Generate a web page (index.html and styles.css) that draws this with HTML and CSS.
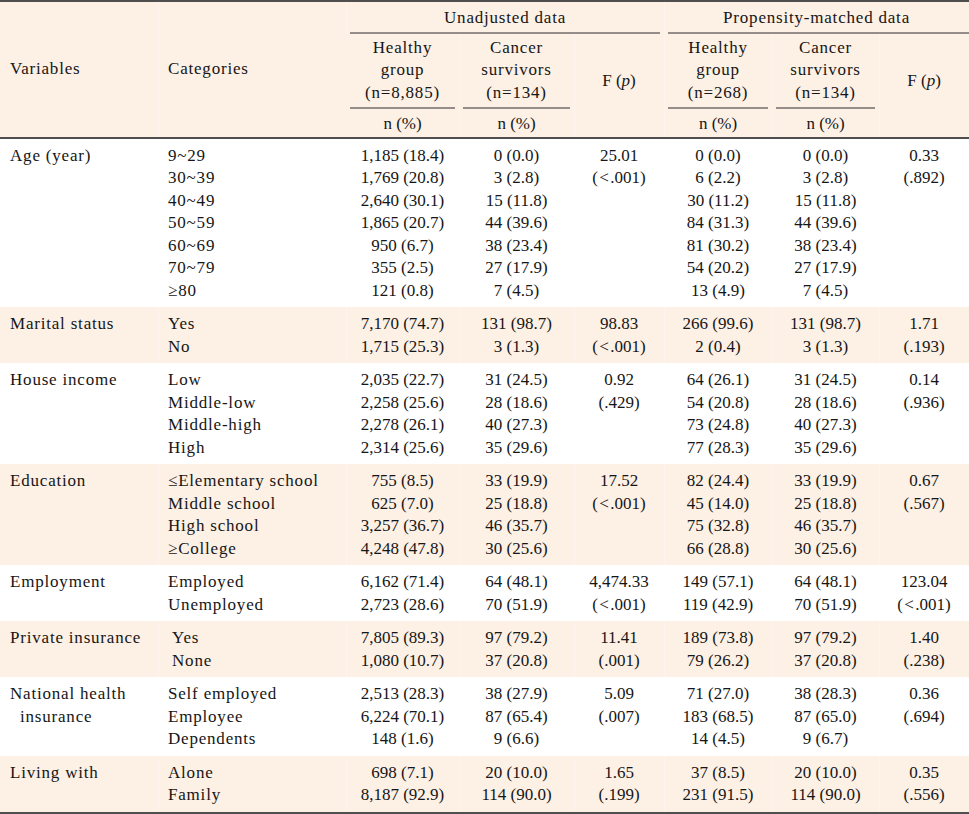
FILE: index.html
```html
<!DOCTYPE html>
<html lang="en">
<head>
<meta charset="utf-8">
<title>Table</title>
<link rel="stylesheet" href="styles.css">
</head>
<body>
<table class="tbl">
  <colgroup>
    <col class="c1"><col class="c2"><col class="c3"><col class="c4"><col class="c5"><col class="c6"><col class="c7"><col class="c8">
  </colgroup>
  <thead>
    <tr class="h1">
      <th rowspan="3" class="lft txt">Variables</th>
      <th rowspan="3" class="lft txt">Categories</th>
      <th colspan="3" class="span txt">Unadjusted data</th>
      <th colspan="3" class="span span-last txt">Propensity-matched data</th>
    </tr>
    <tr class="h2">
      <th class="grp txt">Healthy<br>group<br>(n=8,885)</th>
      <th class="grp txt">Cancer<br>survivors<br>(n=134)</th>
      <th rowspan="2" class="fp">F (<i>p</i>)</th>
      <th class="grp txt">Healthy<br>group<br>(n=268)</th>
      <th class="grp txt">Cancer<br>survivors<br>(n=134)</th>
      <th rowspan="2" class="fp">F (<i>p</i>)</th>
    </tr>
    <tr class="h3">
      <th>n (%)</th>
      <th>n (%)</th>
      <th>n (%)</th>
      <th>n (%)</th>
    </tr>
  </thead>
  <tbody>
    <tr>
      <td class="lft txt">Age (year)</td>
      <td class="lft txt">9~29<br>30~39<br>40~49<br>50~59<br>60~69<br>70~79<br>≥80</td>
      <td>1,185 (18.4)<br>1,769 (20.8)<br>2,640 (30.1)<br>1,865 (20.7)<br>950 (6.7)<br>355 (2.5)<br>121 (0.8)</td>
      <td>0 (0.0)<br>3 (2.8)<br>15 (11.8)<br>44 (39.6)<br>38 (23.4)<br>27 (17.9)<br>7 (4.5)</td>
      <td>25.01<br>(&#8202;&lt;&#8202;.001)</td>
      <td>0 (0.0)<br>6 (2.2)<br>30 (11.2)<br>84 (31.3)<br>81 (30.2)<br>54 (20.2)<br>13 (4.9)</td>
      <td>0 (0.0)<br>3 (2.8)<br>15 (11.8)<br>44 (39.6)<br>38 (23.4)<br>27 (17.9)<br>7 (4.5)</td>
      <td>0.33<br>(.892)</td>
    </tr>
    <tr class="alt">
      <td class="lft txt">Marital status</td>
      <td class="lft txt">Yes<br>No</td>
      <td>7,170 (74.7)<br>1,715 (25.3)</td>
      <td>131 (98.7)<br>3 (1.3)</td>
      <td>98.83<br>(&#8202;&lt;&#8202;.001)</td>
      <td>266 (99.6)<br>2 (0.4)</td>
      <td>131 (98.7)<br>3 (1.3)</td>
      <td>1.71<br>(.193)</td>
    </tr>
    <tr>
      <td class="lft txt">House income</td>
      <td class="lft txt">Low<br>Middle-low<br>Middle-high<br>High</td>
      <td>2,035 (22.7)<br>2,258 (25.6)<br>2,278 (26.1)<br>2,314 (25.6)</td>
      <td>31 (24.5)<br>28 (18.6)<br>40 (27.3)<br>35 (29.6)</td>
      <td>0.92<br>(.429)</td>
      <td>64 (26.1)<br>54 (20.8)<br>73 (24.8)<br>77 (28.3)</td>
      <td>31 (24.5)<br>28 (18.6)<br>40 (27.3)<br>35 (29.6)</td>
      <td>0.14<br>(.936)</td>
    </tr>
    <tr class="alt">
      <td class="lft txt">Education</td>
      <td class="lft txt">≤Elementary school<br>Middle school<br>High school<br>≥College</td>
      <td>755 (8.5)<br>625 (7.0)<br>3,257 (36.7)<br>4,248 (47.8)</td>
      <td>33 (19.9)<br>25 (18.8)<br>46 (35.7)<br>30 (25.6)</td>
      <td>17.52<br>(&#8202;&lt;&#8202;.001)</td>
      <td>82 (24.4)<br>45 (14.0)<br>75 (32.8)<br>66 (28.8)</td>
      <td>33 (19.9)<br>25 (18.8)<br>46 (35.7)<br>30 (25.6)</td>
      <td>0.67<br>(.567)</td>
    </tr>
    <tr>
      <td class="lft txt">Employment</td>
      <td class="lft txt">Employed<br>Unemployed</td>
      <td>6,162 (71.4)<br>2,723 (28.6)</td>
      <td>64 (48.1)<br>70 (51.9)</td>
      <td>4,474.33<br>(&#8202;&lt;&#8202;.001)</td>
      <td>149 (57.1)<br>119 (42.9)</td>
      <td>64 (48.1)<br>70 (51.9)</td>
      <td>123.04<br>(&#8202;&lt;&#8202;.001)</td>
    </tr>
    <tr class="alt">
      <td class="lft txt">Private insurance</td>
      <td class="lft txt ind">Yes<br>None</td>
      <td>7,805 (89.3)<br>1,080 (10.7)</td>
      <td>97 (79.2)<br>37 (20.8)</td>
      <td>11.41<br>(.001)</td>
      <td>189 (73.8)<br>79 (26.2)</td>
      <td>97 (79.2)<br>37 (20.8)</td>
      <td>1.40<br>(.238)</td>
    </tr>
    <tr>
      <td class="lft txt hang">National health insurance</td>
      <td class="lft txt">Self employed<br>Employee<br>Dependents</td>
      <td>2,513 (28.3)<br>6,224 (70.1)<br>148 (1.6)</td>
      <td>38 (27.9)<br>87 (65.4)<br>9 (6.6)</td>
      <td>5.09<br>(.007)</td>
      <td>71 (27.0)<br>183 (68.5)<br>14 (4.5)</td>
      <td>38 (28.3)<br>87 (65.0)<br>9 (6.7)</td>
      <td>0.36<br>(.694)</td>
    </tr>
    <tr class="alt">
      <td class="lft txt">Living with</td>
      <td class="lft txt">Alone<br>Family</td>
      <td>698 (7.1)<br>8,187 (92.9)</td>
      <td>20 (10.0)<br>114 (90.0)</td>
      <td>1.65<br>(.199)</td>
      <td>37 (8.5)<br>231 (91.5)</td>
      <td>20 (10.0)<br>114 (90.0)</td>
      <td>0.35<br>(.556)</td>
    </tr>
  </tbody>
</table>
</body>
</html>
```

FILE: styles.css
```css
html, body {
  margin: 0;
  padding: 0;
  background: #ffffff;
}

body {
  font-family: "Liberation Serif", "Times New Roman", serif;
  font-size: 17px;
  color: #161616;
}

.tbl {
  width: 969px;
  table-layout: fixed;
  border-collapse: collapse;
  border-top: 2px solid #4f4f4f;
  border-bottom: 2px solid #4f4f4f;
  line-height: 22.5px;
}

.c1 { width: 158px; }
.c2 { width: 188px; }
.c3 { width: 113px; }
.c4 { width: 115px; }
.c5 { width: 90px; }
.c6 { width: 108px; }
.c7 { width: 107px; }
.c8 { width: 90px; }

th, td {
  padding: 0;
  font-weight: normal;
  text-align: center;
  box-shadow: inset 1px 0 0 rgba(255, 255, 255, 0.3);
}

th:first-child, td:first-child {
  box-shadow: none;
}

.txt {
  letter-spacing: 0.8px;
}

thead tr {
  background: #fdf0e5;
}

thead {
  border-bottom: 2px solid #4f4f4f;
}

.lft {
  text-align: left;
  padding-left: 10px;
}

th.lft {
  vertical-align: middle;
}

.h1 th.span {
  padding: 5px 0 4px;
  vertical-align: middle;
  background-image: linear-gradient(#958e88, #958e88);
  background-repeat: no-repeat;
  background-size: calc(100% - 8px) 2px;
  background-position: 4px 100%;
}

.h1 th.span-last {
  background-size: calc(100% - 4px) 2px;
}

.h2 th.grp {
  padding: 3px 0 5px;
  vertical-align: middle;
  background-image: linear-gradient(#958e88, #958e88);
  background-repeat: no-repeat;
  background-size: calc(100% - 8px) 2px;
  background-position: 4px 100%;
}

.h2 th.fp {
  vertical-align: middle;
  padding: 0 0 8px;
}

.h3 th {
  padding: 4px 0 1px;
}

tbody td {
  vertical-align: top;
  padding: 6px 0 5px;
}

tbody td.lft {
  padding-left: 10px;
}

tbody td.ind {
  padding-left: 14px;
}

tbody td.hang {
  padding-left: 20px;
  text-indent: -10px;
}

tbody tr.alt {
  background: #fdf0e5;
}
```
